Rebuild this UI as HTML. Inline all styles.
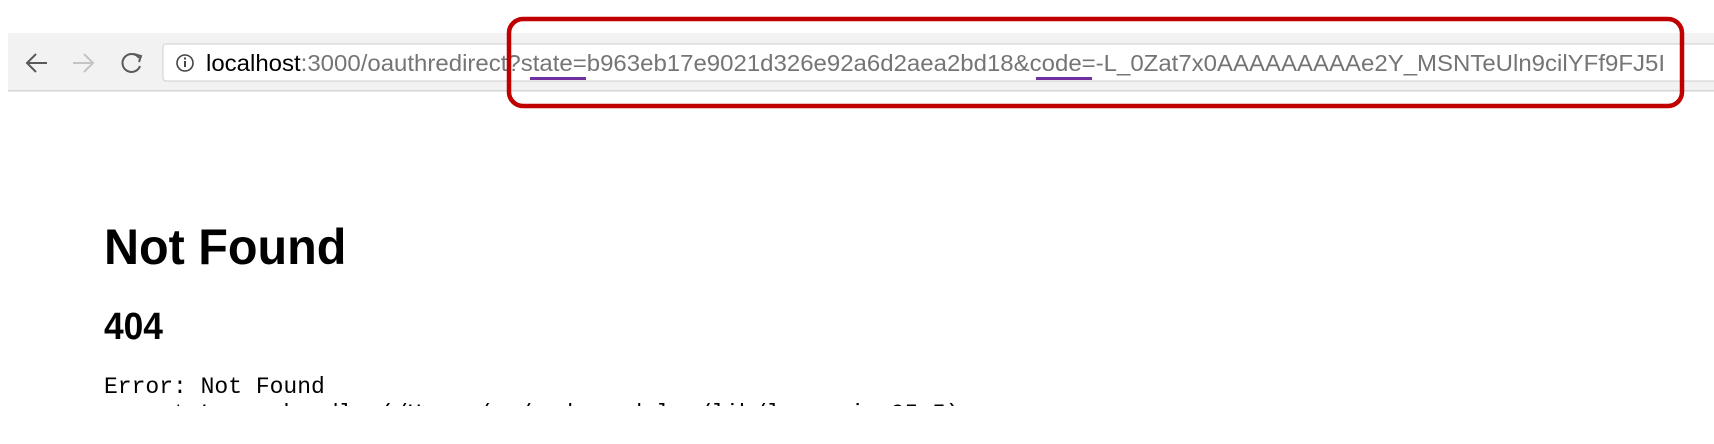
<!DOCTYPE html>
<html><head><meta charset="utf-8"><style>
html,body{margin:0;padding:0;background:#fff;width:1714px;height:444px;overflow:hidden;position:relative}
.h1{position:absolute;left:104px;top:218px;font:bold 50px "Liberation Sans",sans-serif;color:#000;margin:0;transform:scaleX(0.97);transform-origin:left}
.h2{position:absolute;left:104px;top:306px;font:bold 38px "Liberation Sans",sans-serif;color:#000;transform:scaleX(0.93);transform-origin:left}
.pre{position:absolute;left:104px;top:374px;font:23px "Liberation Mono",monospace;color:#000;white-space:pre;line-height:27px;height:32px;overflow:hidden}
</style></head><body>
<svg width="1714" height="120" style="position:absolute;left:0;top:0">
<rect x="8" y="33" width="1706" height="57" fill="#f2f2f2"/>
<rect x="8" y="90" width="1706" height="1.5" fill="#d4d4d4"/>
<rect x="163" y="44" width="1560" height="37" rx="3" fill="#fff" stroke="#cfcfcf"/>
<path d="M47 63 H28 M36 54 L27 63 L36 72" stroke="#5a5a5a" stroke-width="2" fill="none"/>
<path d="M73 63 H92 M84 54 L93 63 L84 72" stroke="#c4c4c4" stroke-width="2" fill="none"/>
<path d="M139 58 A9 9 0 1 0 140 66" stroke="#5a5a5a" stroke-width="2" fill="none"/>
<path d="M134 54 L141 56 L139 62" stroke="#5a5a5a" stroke-width="2" fill="none"/>
<circle cx="185" cy="63" r="8" stroke="#444" stroke-width="1.6" fill="none"/>
<rect x="184" y="61" width="2" height="6" fill="#444"/><rect x="184" y="57.5" width="2" height="2" fill="#444"/>
<text x="206" y="71" font-family="Liberation Sans, sans-serif" font-size="23" fill="#757575" textLength="1459" lengthAdjust="spacingAndGlyphs"><tspan fill="#000">localhost</tspan>:3000/oauthredirect?state=b963eb17e9021d326e92a6d2aea2bd18&amp;code=-L_0Zat7x0AAAAAAAAAe2Y_MSNTeUln9cilYFf9FJ5I</text>
<rect x="530" y="77" width="56" height="3" fill="#7030a0"/>
<rect x="1036" y="77" width="56" height="3" fill="#7030a0"/>
<rect x="509" y="19" width="1173" height="87" rx="14" fill="none" stroke="#c00000" stroke-width="4.5"/>
</svg>
<div class="h1">Not Found</div>
<div class="h2">404</div>
<div class="pre">Error: Not Found
    at Layer.handle (/Users/me/node_modules/lib/layer.js:95:5)</div>
</body></html>
